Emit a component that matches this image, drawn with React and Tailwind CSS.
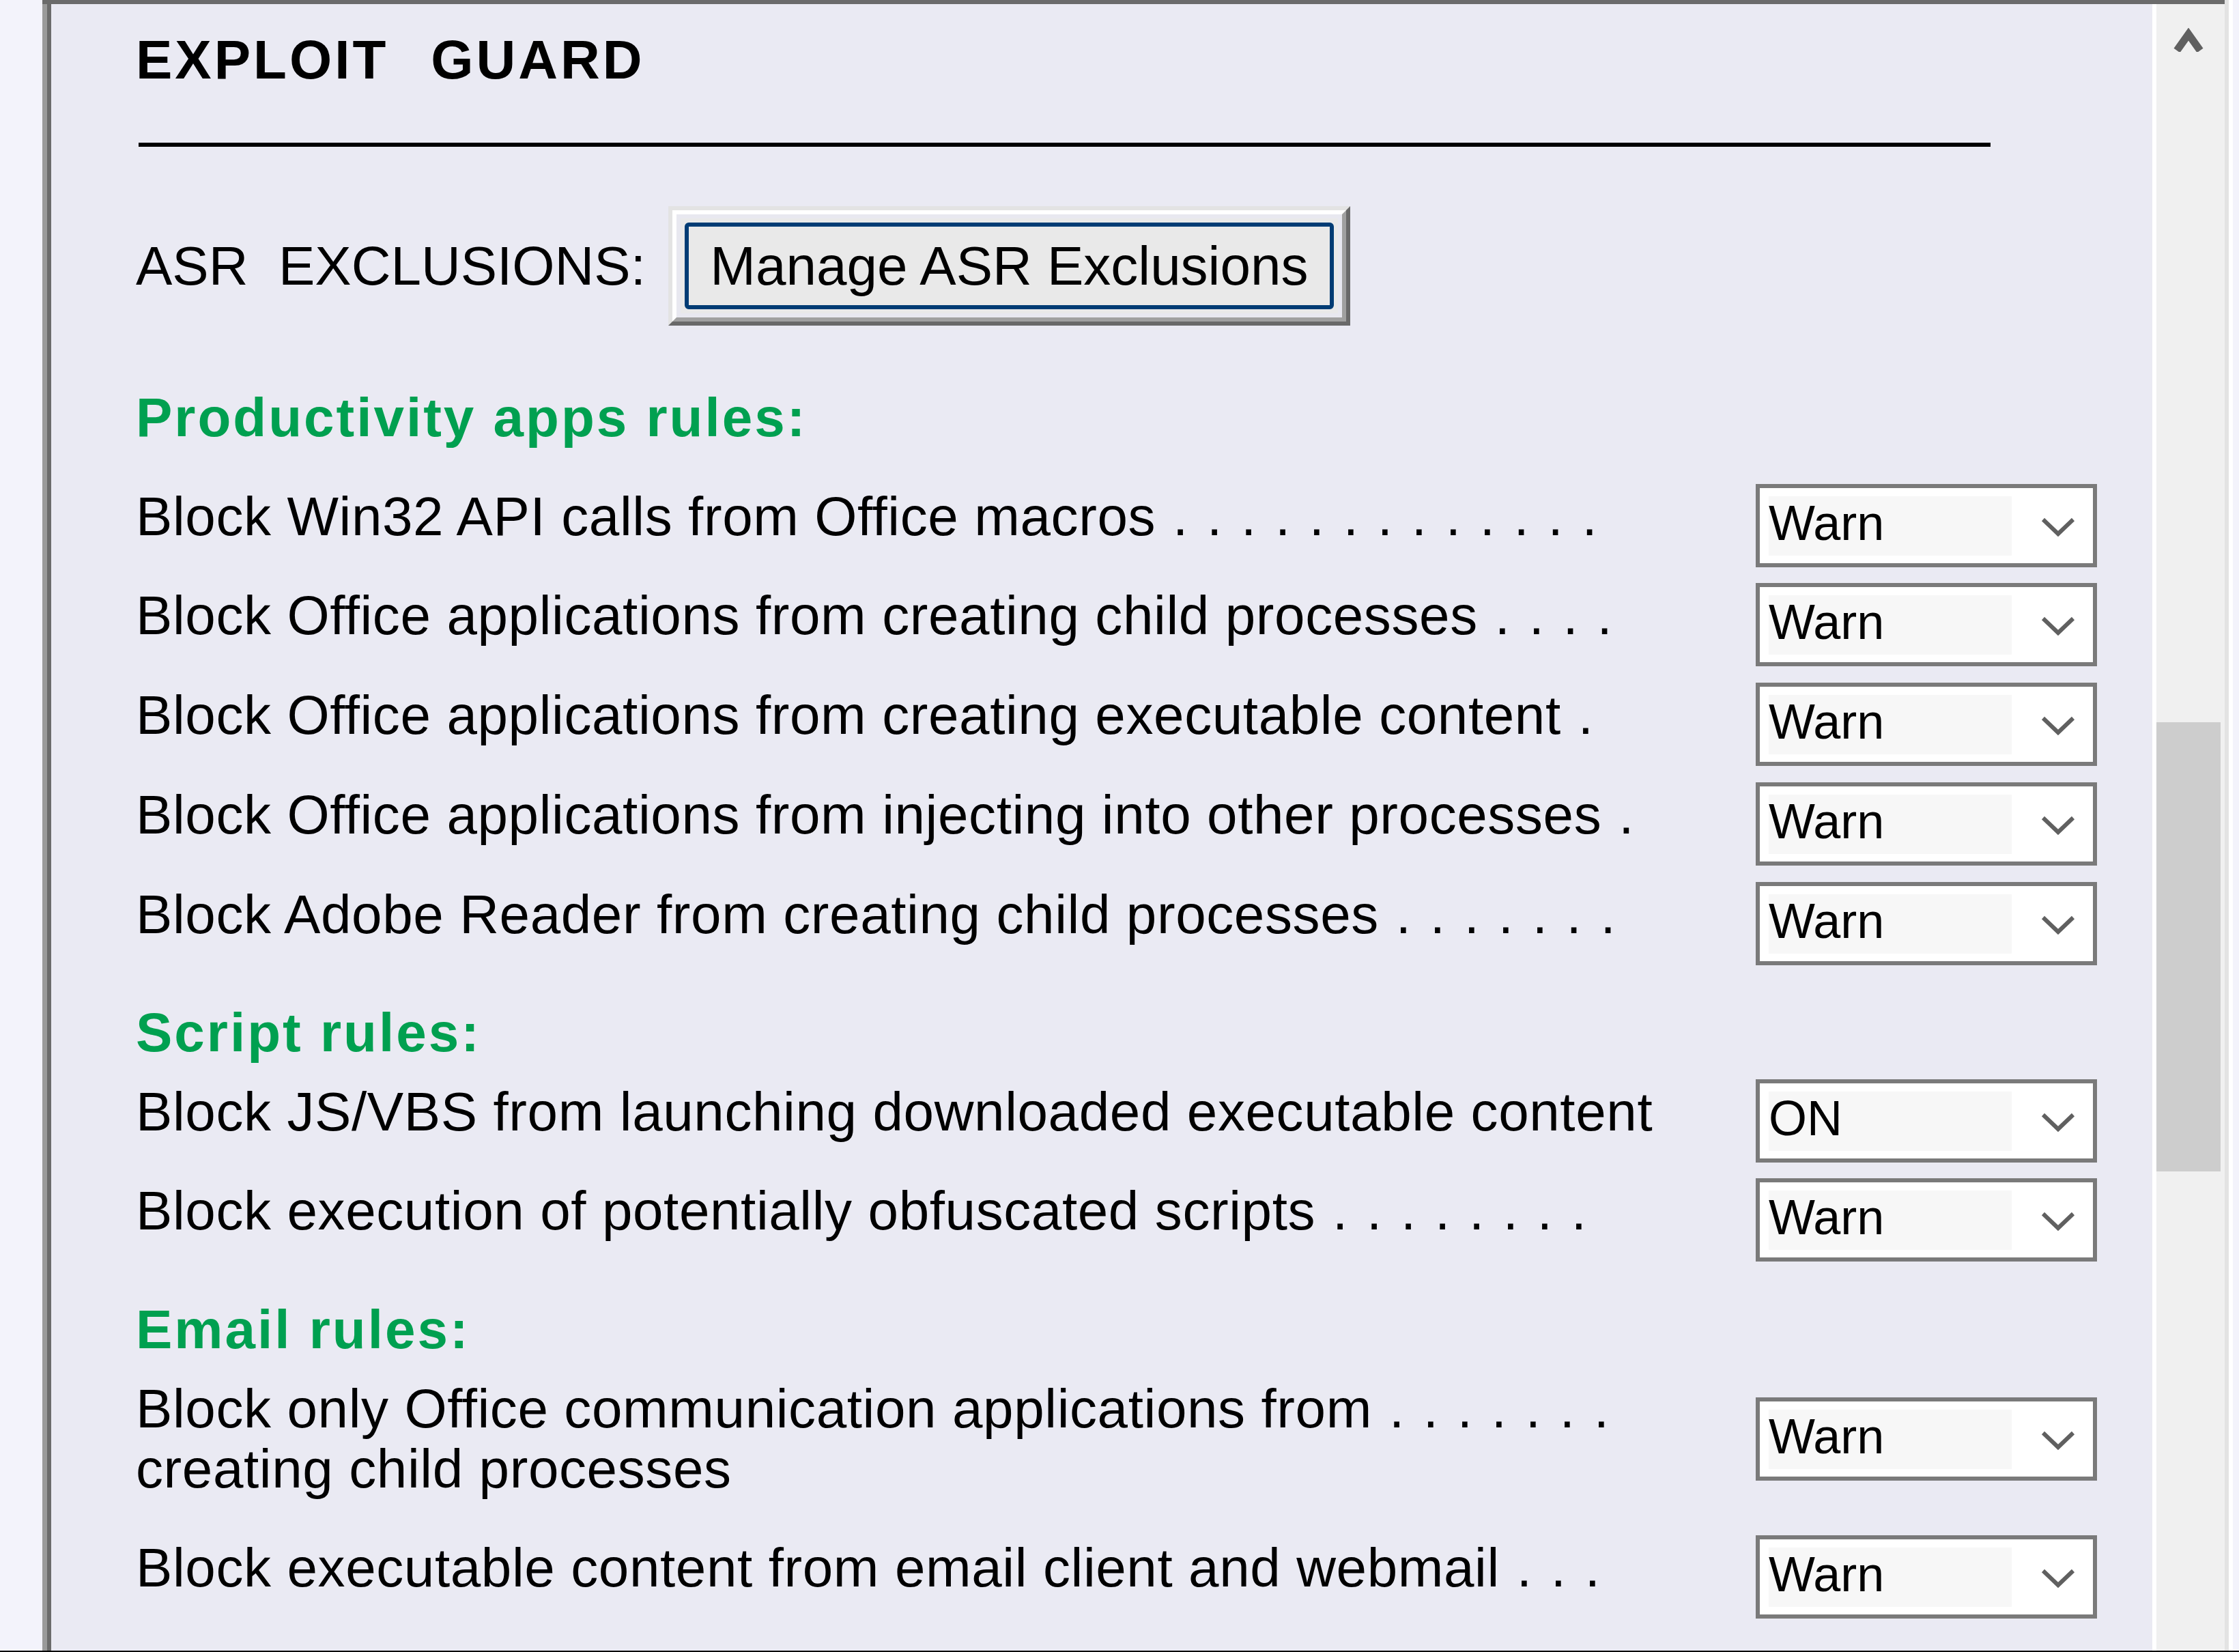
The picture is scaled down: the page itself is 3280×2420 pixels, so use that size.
import React from 'react';

const dots = (n) => Array(n).fill(' .').join('');

const Select = ({ value }) => (
  <div className="flex h-[122px] w-[500px] shrink-0 border-[6px] border-[#7a7a7a] bg-white">
    <div className="ml-[13px] mt-[12px] h-[87px] w-[356px] bg-[#f7f7f7] text-[72px] leading-[78px] text-black">
      {value}
    </div>
    <svg className="ml-[42px] mt-[42px]" width="52" height="30" viewBox="0 0 52 30">
      <polyline points="4,4 26,25 48,4" fill="none" stroke="#606060" strokeWidth="6" />
    </svg>
  </div>
);

const Label = ({ text, n }) => (
  <span className="whitespace-pre">
    {text}
    {n > 0 && <span className="tracking-[2.75px]">{dots(n)}</span>}
  </span>
);

const Rule = ({ text, n, value = 'Warn', className = '' }) => (
  <div className={`flex items-start ${className}`}>
    <div className="mt-[4px] w-[2373px] shrink-0 text-[80px] leading-[88px] tracking-[0.6px] text-black">
      <Label text={text} n={n} />
    </div>
    <Select value={value} />
  </div>
);

const Heading = ({ children, className = '' }) => (
  <div className={`text-[80px] font-bold leading-[88px] tracking-[3px] text-[#00a050] ${className}`}>
    {children}
  </div>
);

export default function App() {
  return (
    <div className="flex h-[2420px] w-[3280px] flex-col overflow-hidden bg-[#f3f3fb] font-['Liberation_Sans',Arial,sans-serif]">
      <div className="flex h-[2418px]">
        <div className="w-[62px] bg-[#f3f3fb]" />
        <div className="flex w-[3197px] flex-col">
          <div className="h-[6px] bg-[#6b6b6b]" />
          <div className="flex flex-1">
            <div className="w-[7px] bg-[#9a9a9a]" />
            <div className="w-[6px] bg-[#6b6b6b]" />

            {/* panel */}
            <div className="flex flex-1 flex-col bg-[#eaeaf3] pl-[124px]">
              <div className="mt-[38px] flex text-[80px] font-bold leading-[88px] tracking-[4px] text-black">
                <span>EXPLOIT</span>
                <span className="ml-[62px]">GUARD</span>
              </div>
              <div className="ml-[4px] mt-[77px] h-[6px] w-[2713px] bg-black" />

              <div className="mt-[87px] flex items-center">
                <span className="whitespace-pre text-[80px] leading-[88px] text-black">ASR  EXCLUSIONS:</span>
                <div className="ml-[33px] h-[175px] w-[999px] border-[6px] border-t-[#e3e3e3] border-l-[#e3e3e3] border-b-[#696969] border-r-[#696969]">
                  <div className="h-full w-full border-[6px] border-t-white border-l-white border-b-[#a0a0a0] border-r-[#a0a0a0]">
                    <div className="h-full w-full border-[6px] border-[#e8e8f0] bg-[#e9e9e9] p-[6px]">
                      <div className="flex h-full w-full items-center justify-center rounded-[6px] border-[6px] border-[#003c74] text-[80px] leading-[88px] text-black">
                        Manage ASR Exclusions
                      </div>
                    </div>
                  </div>
                </div>
              </div>

              <Heading className="mt-[91px]">Productivity apps rules:</Heading>
              <Rule className="mt-[53px]" text="Block Win32 API calls from Office macros" n={13} />
              <Rule className="mt-[23px]" text="Block Office applications from creating child processes" n={4} />
              <Rule className="mt-[24px]" text="Block Office applications from creating executable content" n={1} />
              <Rule className="mt-[24px]" text="Block Office applications from injecting into other processes" n={1} />
              <Rule className="mt-[24px]" text="Block Adobe Reader from creating child processes" n={7} />

              <Heading className="mt-[55px]">Script rules:</Heading>
              <Rule className="mt-[24px]" text="Block JS/VBS from launching downloaded executable content" n={0} value="ON" />
              <Rule className="mt-[23px]" text="Block execution of potentially obfuscated scripts" n={8} />

              <Heading className="mt-[56px]">Email rules:</Heading>
              <div className="mt-[28px] flex items-center">
                <div className="w-[2373px] shrink-0 text-[80px] leading-[88px] tracking-[0.6px] text-black">
                  <Label text="Block only Office communication applications from" n={7} />
                  <br />
                  <span>creating child processes</span>
                </div>
                <Select value="Warn" />
              </div>
              <Rule className="mt-[53px]" text="Block executable content from email client and webmail" n={3} />
            </div>

            <div className="w-[6px] bg-white" />

            {/* scrollbar */}
            <div className="flex w-[100px] flex-col bg-[#f0f0f0]">
              <svg className="ml-[25px] mt-[35px]" width="44" height="35" viewBox="0 0 44 35">
                <polyline points="5,33 22,9 39,33" fill="none" stroke="#606060" strokeWidth="11" />
              </svg>
              <div className="mt-[982px] h-[658px] w-[94px] bg-[#cdcdcd]" />
            </div>
          </div>
        </div>
        <div className="w-[6px] bg-[#e3e3e3]" />
        <div className="w-[6px] bg-white" />
        <div className="w-[9px] bg-[#f3f3fb]" />
      </div>
      <div className="h-[2px] bg-black" />
    </div>
  );
}
